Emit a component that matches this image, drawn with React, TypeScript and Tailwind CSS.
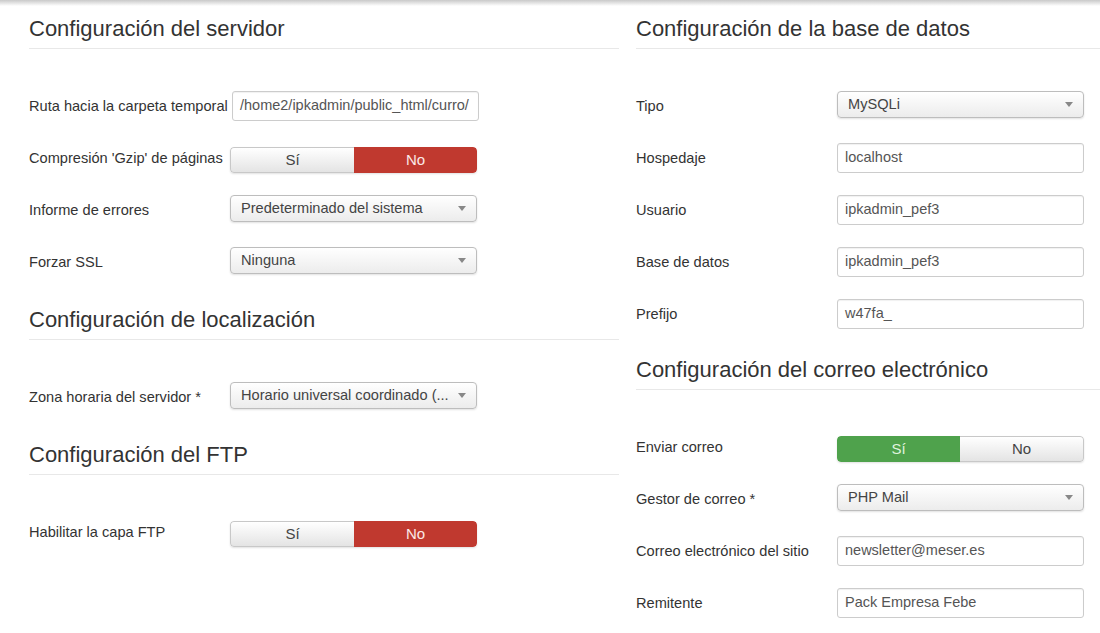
import React from 'react'

const font = "font-['Liberation_Sans',Arial,sans-serif]"

function Heading({ children, className = '' }: { children: React.ReactNode; className?: string }) {
	return (
		<h2 className={`text-[22px] leading-[28px] text-[#333] font-normal pb-[5px] border-b border-[#e8e8e8] mb-[42px] ${className}`}>
			{children}
		</h2>
	)
}

function Row({ label, children, last }: { label: string; children: React.ReactNode; last?: boolean }) {
	return (
		<div className={`flex items-start h-[30px] ${last ? '' : 'mb-[22px]'}`}>
			<div className="w-[201px] shrink-0 leading-[30px] text-[14.6px] text-[#333] whitespace-nowrap">{label}</div>
			{children}
		</div>
	)
}

function TextInput({ value, className = '' }: { value: string; className?: string }) {
	return (
		<div className={`w-[247px] h-[30px] border border-[#ccc] rounded-[3px] bg-white px-[7px] flex items-center text-[14.5px] text-[#555] shadow-[inset_0_1px_1px_rgba(0,0,0,0.06)] whitespace-nowrap overflow-hidden ${className}`}>
			{value}
		</div>
	)
}

function Select({ value }: { value: string }) {
	return (
		<div className="w-[247px] h-[27px] border border-[#bdbdbd] rounded-[4px] bg-gradient-to-b from-white to-[#ececec] shadow-[0_1px_2px_rgba(0,0,0,0.12)] pl-[10px] pr-[10px] flex items-center justify-between text-[14.6px] text-[#444] whitespace-nowrap">
			<span>{value}</span>
			<span className="w-0 h-0 border-x-[4px] border-x-transparent border-t-[5px] border-t-[#888]" />
		</div>
	)
}

function Toggle({ active }: { active: 'yes' | 'no' }) {
	const off = 'bg-gradient-to-b from-white to-[#e4e4e4] text-[#444] border border-[#c8c8c8]'
	return (
		<div className="flex w-[247px] h-[26px] mt-[4px] rounded-[4px] overflow-hidden shadow-[0_1px_2px_rgba(0,0,0,0.12)] text-[15px]">
			<div
				className={`flex-1 flex items-center justify-center rounded-l-[4px] ${
					active === 'yes' ? 'bg-[#4fa24c] text-[#dff3dc]' : `${off} border-r-0`
				}`}
			>
				Sí
			</div>
			<div
				className={`flex-1 flex items-center justify-center rounded-r-[4px] ${
					active === 'no' ? 'bg-[#c0392f] text-[#fbe9e7]' : `${off} border-l-0`
				}`}
			>
				No
			</div>
		</div>
	)
}

export default function App() {
	return (
		<div className={`w-[1100px] h-[633px] overflow-hidden bg-white ${font}`}>
			<div className="h-[6px] bg-gradient-to-b from-[#c9c9c9] to-white" />
			<div className="flex pt-[9px] pl-[29px]">
				{/* left column */}
				<div className="w-[590px] shrink-0">
					<Heading>Configuración del servidor</Heading>
					<Row label="Ruta hacia la carpeta temporal">
						<TextInput value="/home2/ipkadmin/public_html/curro/" className="ml-[2px]" />
					</Row>
					<Row label="Compresión 'Gzip' de páginas">
						<Toggle active="no" />
					</Row>
					<Row label="Informe de errores">
						<Select value="Predeterminado del sistema" />
					</Row>
					<Row label="Forzar SSL" last>
						<Select value="Ninguna" />
					</Row>

					<Heading className="mt-[29px]">Configuración de localización</Heading>
					<Row label="Zona horaria del servidor *" last>
						<Select value="Horario universal coordinado (..." />
					</Row>

					<Heading className="mt-[29px]">Configuración del FTP</Heading>
					<Row label="Habilitar la capa FTP" last>
						<Toggle active="no" />
					</Row>
				</div>

				{/* right column */}
				<div className="ml-[17px] flex-1">
					<Heading>Configuración de la base de datos</Heading>
					<Row label="Tipo">
						<Select value="MySQLi" />
					</Row>
					<Row label="Hospedaje">
						<TextInput value="localhost" />
					</Row>
					<Row label="Usuario">
						<TextInput value="ipkadmin_pef3" />
					</Row>
					<Row label="Base de datos">
						<TextInput value="ipkadmin_pef3" />
					</Row>
					<Row label="Prefijo" last>
						<TextInput value="w47fa_" />
					</Row>

					<Heading className="mt-[27px]">Configuración del correo electrónico</Heading>
					<Row label="Enviar correo">
						<Toggle active="yes" />
					</Row>
					<Row label="Gestor de correo *">
						<Select value="PHP Mail" />
					</Row>
					<Row label="Correo electrónico del sitio">
						<TextInput value="newsletter@meser.es" />
					</Row>
					<Row label="Remitente" last>
						<TextInput value="Pack Empresa Febe" />
					</Row>
				</div>
			</div>
		</div>
	)
}
